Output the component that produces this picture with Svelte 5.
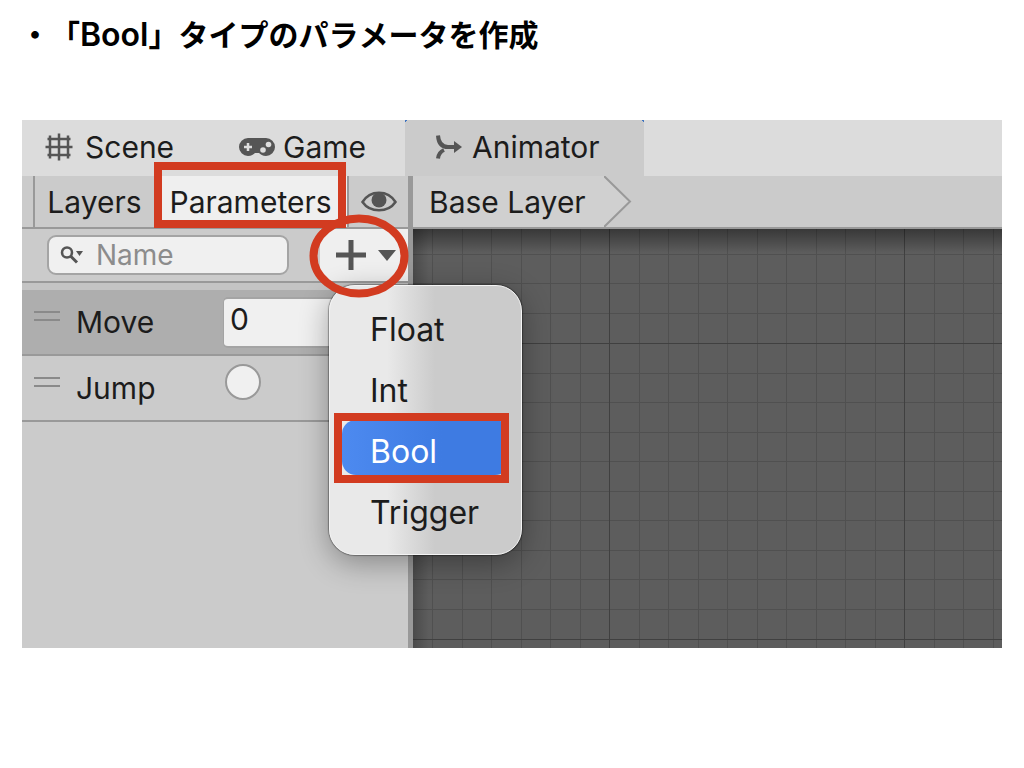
<script>
  const types = ['Float', 'Int', 'Bool', 'Trigger'];
  let selected = $state('Bool');

  // Offsets of the minor lines inside one major grid cell
  const minor = [30, 59, 89, 118, 148, 177, 207, 236, 266];
</script>

<main>
  <h1>・「<span class="latin">Bool</span>」タイプのパラメータを作成</h1>

  <section class="window">
    <nav class="tabs">
      <button class="tab scene">
        <svg width="28" height="28" viewBox="0 0 28 28" fill="none" stroke="#555" stroke-width="2.5">
          <path d="M5 2.500V25.500M14 0.500V27.500M23 2.500V25.500" />
          <path d="M2.500 6H25.500M0.500 14H27.500M2.500 22H25.500" />
        </svg>
        Scene
      </button>
      <button class="tab game">
        <svg width="36" height="20" viewBox="0 0 36 20">
          <path d="M9 1H27A9 9 0 0 1 27 19C23.500 19 21.500 17.500 20 16H16C14.500 17.500 12.500 19 9 19A9 9 0 0 1 9 1Z" fill="#555" />
          <path d="M9 6V14M5 10H13" stroke="#ddd" stroke-width="2.500" />
          <circle cx="29.5" cy="7.5" r="2.800" fill="#ddd" />
          <circle cx="24" cy="13" r="2.800" fill="#ddd" />
        </svg>
        Game
      </button>
      <button class="tab animator">
        <svg width="26" height="24" viewBox="0 0 26 24" fill="none" stroke="#555" stroke-width="4">
          <path d="M2 0.500C2.500 8 6 12 12 12H19" />
          <path d="M2 23.500C2.500 19 4.500 16.500 8 15" />
          <path d="M18 6L26 12L18 18Z" fill="#555" stroke="none" />
        </svg>
        Animator
      </button>
    </nav>

    <div class="body">
      <aside>
        <div class="bar">
          <button class="layers">Layers</button>
          <button class="parameters">Parameters</button>
          <button class="eye" aria-label="Toggle panel">
            <svg width="36" height="22" viewBox="0 0 36 22">
              <path d="M1.500 11C9 -1.500 27 -1.500 34.500 11C27 22 9 22 1.500 11Z" fill="none" stroke="#555" stroke-width="2.500" />
              <circle cx="18" cy="9" r="7.500" fill="#555" />
            </svg>
          </button>
        </div>

        <div class="filter">
          <label class="search">
            <svg width="24" height="18" viewBox="0 0 24 18">
              <circle cx="7" cy="6.500" r="5" fill="none" stroke="#555" stroke-width="2.500" />
              <path d="M10.500 10L17 16.500" stroke="#555" stroke-width="3" />
              <path d="M16 5H23L19.500 10Z" fill="#555" />
            </svg>
            <input type="text" placeholder="Name" aria-label="Name" />
          </label>
          <div class="add">
            <button aria-label="Add parameter">
              <svg width="62" height="32" viewBox="0 0 62 32">
                <path d="M16 1V31M1 16H31" stroke="#555" stroke-width="5" />
                <path d="M43 11H61L52 22Z" fill="#555" />
              </svg>
            </button>
            <div class="menu" role="menu">
              {#each types as type}
                <button
                  class="item"
                  class:selected={selected === type}
                  role="menuitem"
                  onclick={() => (selected = type)}
                >
                  {type}
                </button>
              {/each}
            </div>
            <svg class="ring" width="100" height="84" viewBox="0 0 100 84">
              <ellipse cx="50" cy="42" rx="45.500" ry="37.500" fill="none" stroke="#d23b20" stroke-width="8" />
            </svg>
          </div>
        </div>

        <div class="list">
          <div class="row active">
            <span class="handle"></span>
            <label for="move">Move</label>
            <input id="move" class="number" type="text" value="0" />
          </div>
          <div class="row">
            <span class="handle"></span>
            <label for="jump">Jump</label>
            <input id="jump" class="trigger" type="radio" />
          </div>
        </div>
      </aside>

      <div class="graph">
        <div class="crumbs">
          <button>Base Layer</button>
          <svg width="28" height="51" viewBox="0 0 28 51">
            <path d="M0 0L26 25.500L0 51Z" fill="#d0d0d0" />
            <path d="M0 0L26 25.500L0 51" fill="none" stroke="#999" stroke-width="2" />
          </svg>
        </div>
        <div class="canvas">
          <svg width="100%" height="100%">
            <defs>
              <pattern id="grid" x="196" y="114" width="295" height="296" patternUnits="userSpaceOnUse">
                {#each minor as n}
                  <rect x={n} y="0" width="1" height="296" fill="#505050" />
                  <rect x="0" y={n} width="295" height="1" fill="#505050" />
                {/each}
                <rect width="1" height="296" fill="#404040" />
                <rect width="295" height="1" fill="#404040" />
              </pattern>
            </defs>
            <rect width="100%" height="100%" fill="url(#grid)" />
          </svg>
        </div>
      </div>
    </div>
  </section>
</main>

<style>
  :global(body) {
    margin: 0;
    background: #fff;
  }

  main {
    padding: 0 22px;
    font-family: Inter, 'Noto Sans CJK JP', sans-serif;
    color: #1c1c1c;
  }

  h1 {
    margin: 0 0 52px -2px;
    padding-top: 8px;
    font: 700 30px/50px 'Noto Sans CJK JP', sans-serif;
    color: #000;
    height: 60px;
    white-space: nowrap;
    text-spacing-trim: space-all;
    font-kerning: none;
  }

  .latin {
    font-family: Inter, sans-serif;
    font-weight: 600;
    font-size: 32px;
  }

  button,
  input {
    box-sizing: border-box;
    margin: 0;
    padding: 0;
    border: 0;
    background: none;
    color: inherit;
    font: inherit;
  }

  svg {
    display: block;
    flex: none;
  }

  .window {
    display: flex;
    flex-direction: column;
    min-height: 528px;
    background: #cbcbcb;
    font-size: 30px;
    line-height: 36px;
  }

  .tabs {
    display: flex;
    height: 56px;
    background: #dcdcdc;
  }

  .tab {
    display: flex;
    align-items: center;
    box-sizing: border-box;
    padding-bottom: 3px;
  }

  .scene {
    width: 193px;
    padding-left: 23px;
    gap: 12px;
  }

  .game {
    width: 190px;
    padding-left: 24px;
    gap: 8px;
  }

  .animator {
    width: 239px;
    padding-left: 31px;
    gap: 10px;
    background: linear-gradient(135deg, #3f74c0 2px, transparent 2px),
      linear-gradient(225deg, #3f74c0 2px, transparent 2px), #cbcbcb;
  }

  .body {
    display: flex;
    flex: 1;
  }

  aside {
    flex: 0 0 386px;
    min-width: 0;
    max-width: 386px;
    border-right: 5px solid #999;
  }

  .bar {
    display: flex;
    height: 51px;
    padding-left: 11px;
    border-bottom: 2px solid #999;
  }

  .layers {
    width: 121px;
    border-left: 2px solid #999;
  }

  .parameters {
    position: relative;
    width: 193px;
    background: #efefef;
  }

  .parameters::after {
    content: '';
    position: absolute;
    inset: -14px 1px -1px 0;
    border: 8px solid #d23b20;
  }

  .eye {
    display: flex;
    flex: 1;
    align-items: center;
    justify-content: center;
    border-left: 2px solid #999;
  }

  .filter {
    display: flex;
    align-items: center;
    justify-content: space-between;
    height: 52px;
    padding-left: 25px;
    border-bottom: 2px solid #999;
  }

  .search {
    display: flex;
    align-items: center;
    box-sizing: border-box;
    width: 242px;
    height: 40px;
    padding-left: 11px;
    gap: 12px;
    border: 2px solid #a4a4a4;
    border-radius: 9px;
    background: #f0f0f0;
  }

  .search input {
    flex: 1;
    min-width: 0;
    font-size: 28px;
  }

  .search input::placeholder {
    color: #8c8c8c;
    opacity: 1;
  }

  .add {
    position: relative;
    height: 52px;
  }

  .add > button {
    display: flex;
    align-items: center;
    width: 88px;
    height: 52px;
    padding-left: 15px;
    background: #efefef;
  }

  .ring {
    position: absolute;
    z-index: 2;
    top: -15px;
    left: -11px;
  }

  .menu {
    position: absolute;
    z-index: 1;
    top: 56px;
    left: 9px;
    display: flex;
    flex-direction: column;
    gap: 6px;
    box-sizing: border-box;
    width: 193px;
    padding: 12px 12px 18px;
    border: 1px solid #f4f4f4;
    border-radius: 26px;
    background: linear-gradient(90deg, #e9e9e9 30%, #cbcbcb 55%);
    box-shadow: 0 0 1px 1px #0005, 0 8px 30px #0005;
  }

  .item {
    position: relative;
    height: 55px;
    padding: 8px 0 0 28px;
    border-radius: 14px;
    font-size: 32px;
    text-align: left;
  }

  .item.selected {
    background: linear-gradient(90deg, #4d8af0, #3e7be2 60%);
    color: #fff;
  }

  .item.selected::after {
    content: '';
    position: absolute;
    inset: -7px 0 -8px -8px;
    border: 8px solid #d23b20;
  }

  .list {
    padding-top: 7px;
    background: #c4c4c4;
  }

  .row {
    display: flex;
    align-items: center;
    height: 64px;
    padding-left: 12px;
    border-bottom: 2px solid #999;
    background: #cbcbcb;
  }

  .row.active {
    background: #aeaeae;
  }

  .row label {
    width: 147px;
    padding-left: 16px;
    box-sizing: border-box;
  }

  .handle {
    width: 26px;
    height: 6px;
    margin-bottom: 12px;
    border: solid #8a8a8a;
    border-width: 2px 0;
  }

  .number {
    flex: 1;
    min-width: 0;
    height: 51px;
    margin-left: 16px;
    padding: 0 6px 6px;
    border: 2px solid #a4a4a4;
    border-width: 2px 0 2px 1px;
    border-radius: 5px 0 0 5px;
    background: #f0f0f0;
  }

  .trigger {
    appearance: none;
    width: 36px;
    height: 36px;
    margin: 0 0 12px 18px;
    border: 2px solid #999;
    border-radius: 50%;
    background: #f0f0f0;
  }

  .graph {
    display: flex;
    flex: 1;
    flex-direction: column;
    min-width: 0;
  }

  .crumbs {
    display: flex;
    height: 51px;
    border-bottom: 2px solid #999;
  }

  .crumbs button {
    width: 191px;
    padding-left: 16px;
    background: #d0d0d0;
    text-align: left;
  }

  .canvas {
    position: relative;
    flex: 1;
    background: #5d5d5d;
  }

  .canvas svg {
    position: absolute;
    inset: 0;
  }

  .canvas::after {
    content: '';
    position: absolute;
    inset: 0;
    background: linear-gradient(#0006, transparent 24px),
      linear-gradient(90deg, #0003, transparent 16px);
  }
</style>
